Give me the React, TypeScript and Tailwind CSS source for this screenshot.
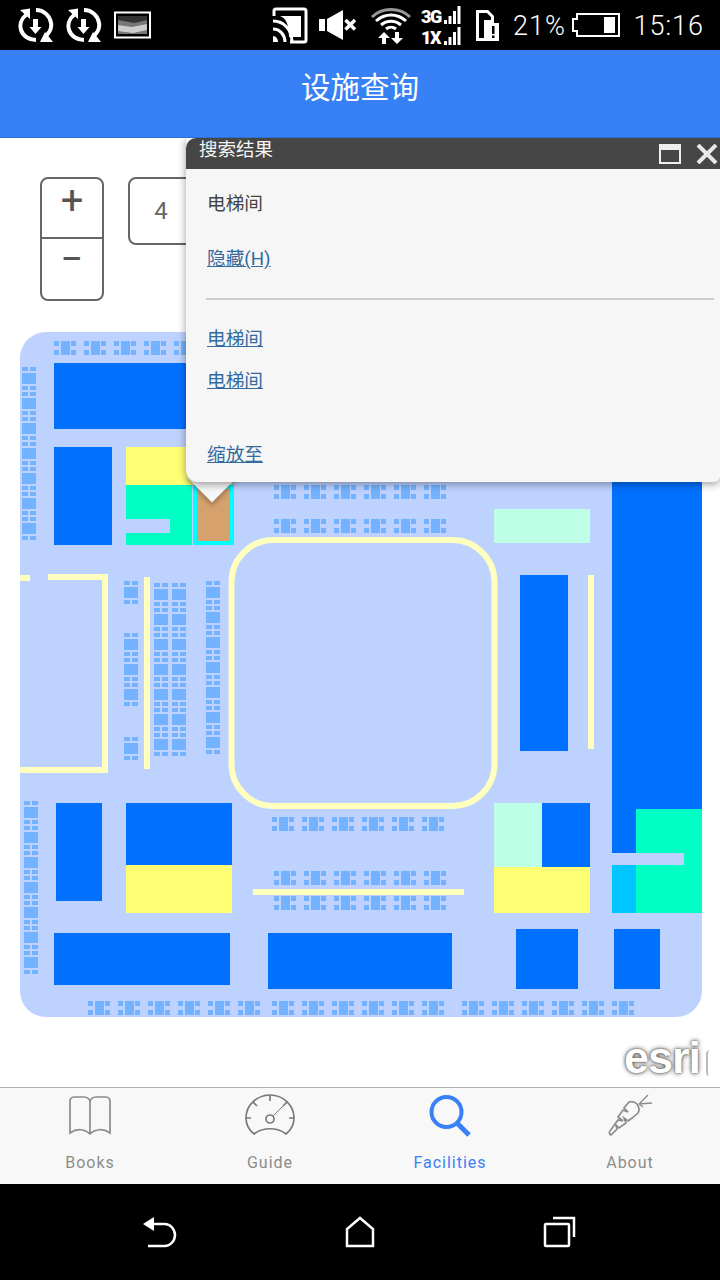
import React from "react";

const BLUE = "#0070ff";
const YEL = "#ffff73";
const AQUA = "#00ffc5";
const MINT = "#beffe8";
const PALE = "#ffffbe";
const DOT = "#73b2ff";
const LAND = "#bed2ff";

type R = [number, number, number, number, string];
const rects: R[] = [
  [54, 363, 180, 66, BLUE],
  [54, 447, 58, 98, BLUE],
  [126, 447, 106, 38, YEL],
  [126, 485, 66, 60, AQUA],
  [126, 519, 44, 14, LAND],
  [494, 470, 96, 12, YEL],
  [494, 509, 96, 34, MINT],
  [520, 575, 48, 176, BLUE],
  [588, 575, 6, 174, PALE],
  [612, 470, 90, 339, BLUE],
  [612, 809, 24, 44, BLUE],
  [636, 809, 66, 104, AQUA],
  [612, 865, 24, 48, "#00c5ff"],
  [612, 853, 72, 12, LAND],
  [20, 575, 10, 6, PALE],
  [48, 574, 60, 6, PALE],
  [102, 574, 6, 198, PALE],
  [20, 767, 88, 6, PALE],
  [144, 577, 6, 192, PALE],
  [56, 803, 46, 98, BLUE],
  [126, 803, 106, 62, BLUE],
  [126, 865, 106, 48, YEL],
  [253, 889, 211, 6, PALE],
  [494, 803, 48, 64, MINT],
  [542, 803, 48, 64, BLUE],
  [494, 867, 96, 46, YEL],
  [54, 933, 176, 52, BLUE],
  [268, 933, 184, 56, BLUE],
  [516, 929, 62, 60, BLUE],
  [614, 929, 46, 60, BLUE],
];

function HCluster({ x, y, w = 22 }: { x: number; y: number; w?: number }) {
  return (
    <g fill={DOT}>
      <rect x={x} y={y} width={5} height={5} />
      <rect x={x} y={y + 9} width={5} height={5} />
      <rect x={x + 7} y={y} width={w - 13} height={14} />
      <rect x={x + w - 5} y={y} width={5} height={5} />
      <rect x={x + w - 5} y={y + 9} width={5} height={5} />
    </g>
  );
}

function VCells({ x, y, n, w = 14 }: { x: number; y: number; n: number; w?: number }) {
  const out: React.ReactNode[] = [];
  let cy = y;
  for (let i = 0; i < n; i++) {
    out.push(
      <g key={i} fill={DOT}>
        <rect x={x} y={cy} width={w / 2 - 1} height={4} />
        <rect x={x + w / 2 + 1} y={cy} width={w / 2 - 1} height={4} />
        <rect x={x} y={cy + 6} width={w} height={11} />
        <rect x={x} y={cy + 19} width={w / 2 - 1} height={4} />
        <rect x={x + w / 2 + 1} y={cy + 19} width={w / 2 - 1} height={4} />
      </g>
    );
    cy += 25;
  }
  return <>{out}</>;
}

function MapDrawing() {
  const row = (y: number, x0: number, n: number, step = 30) =>
    Array.from({ length: n }, (_, i) => <HCluster key={`${y}-${x0}-${i}`} x={x0 + i * step} y={y} />);
  return (
    <svg className="absolute inset-0 h-full w-full" viewBox="0 138 720 949">
      <rect x={20} y={332} width={682} height={685} rx={26} fill={LAND} />
      {row(341, 54, 6)}
      {row(485, 274, 6)}
      {row(519, 274, 6)}
      {row(817, 272, 6)}
      {row(871, 274, 6)}
      {row(896, 274, 6)}
      {row(1001, 88, 6)}
      {row(1001, 272, 6)}
      {row(1001, 462, 6)}
      <VCells x={22} y={367} n={7} />
      <VCells x={124} y={581} n={1} />
      <VCells x={124} y={633} n={3} />
      <VCells x={124} y={737} n={1} />
      <VCells x={154} y={583} n={7} />
      <VCells x={172} y={583} n={7} />
      <VCells x={206} y={581} n={7} />
      <VCells x={24} y={801} n={7} />
      {rects.map((r, i) => (
        <rect key={i} x={r[0]} y={r[1]} width={r[2]} height={r[3]} fill={r[4]} />
      ))}
      <rect x={231.5} y={540} width={263} height={266} rx={42} fill="none" stroke={PALE} strokeWidth={6} />
      <rect x={195} y={487} width={37} height={56} fill="#d6a16d" stroke="#00ffff" strokeWidth={4} />
    </svg>
  );
}

function SyncIcon() {
  return (
    <svg width="36" height="36" viewBox="0 0 36 36" fill="none">
      <path d="M8 8C3 12 1.500 18 3 23c2 6 8 10 15 10" stroke="#fff" strokeWidth="4" />
      <path d="M18 3c8 0 14 6 15 13 1 5-1 9-5 13" stroke="#fff" strokeWidth="4" />
      <path d="M2 3l10-1.500V12z" fill="#fff" />
      <path d="M22 35h13l-8-10z" fill="#fff" />
      <path d="M15 12h5v8h3.500L17.500 27 11.500 20H15z" fill="#fff" />
    </svg>
  );
}

function StatusBar() {
  return (
    <div className="flex h-[50px] shrink-0 items-center bg-black pl-[18px] pr-[16px] font-['Roboto',sans-serif] text-white">
      <SyncIcon />
      <div className="ml-[12px]">
        <SyncIcon />
      </div>
      <svg className="ml-[12px]" width="37" height="28" viewBox="0 0 37 28">
        <rect x="1" y="1.500" width="35" height="25" fill="#000" stroke="#fff" strokeWidth="2" />
        <rect x="4" y="5" width="29" height="18" fill="#777" />
        <path d="M4 5h29v4L20 12 4 9z" fill="#333" />
        <path d="M4 14l14 2 15-3v6l-14 3-15-2z" fill="#ccc" />
      </svg>
      <svg className="ml-[121px]" width="36" height="37" viewBox="0 0 36 37" fill="none">
        <path d="M2 9V4a2 2 0 0 1 2-2h28a2 2 0 0 1 2 2v29a2 2 0 0 1-2 2H18" stroke="#fff" strokeWidth="3" />
        <path d="M8 9h21v21H17C17 18 14 11 8 9z" fill="#fff" />
        <path d="M1 14c11 0 19 9 19 21M1 22c7 0 12 6 12 13" stroke="#fff" strokeWidth="3" />
        <path d="M1 29c3 0 5 3 5 6H1z" fill="#fff" />
      </svg>
      <svg className="ml-[10px]" width="44" height="34" viewBox="0 0 44 34">
        <path d="M1 11h6v12H1zM9 11l16-9v30L9 23z" fill="#fff" />
        <path d="M27.500 12l9.500 9.500M37 12l-9.500 9.500" stroke="#fff" strokeWidth="3.500" />
      </svg>
      <svg className="ml-[8px]" width="42" height="38" viewBox="0 0 42 38" fill="none">
        <path d="M2 11C12 1 30 1 40 11" stroke="#999" strokeWidth="3" />
        <path d="M6 15c9-8 21-8 30 0M11 19c6-5 14-5 20 0M16 23c3-2.500 7-2.500 10 0" stroke="#fff" strokeWidth="3" />
        <path d="M14 26l6 6h-4v6h-4v-6H8zM27 38l6-6h-4v-6h-4v6h-4z" fill="#fff" />
      </svg>
      <div className="ml-[9px] flex w-[40px] flex-col gap-[3px]">
        <div className="flex h-[18px] items-end justify-between">
          <span className="text-[18px] leading-[14px] font-black tracking-[-1.5px]">3G</span>
          <Bars />
        </div>
        <div className="flex h-[18px] items-end justify-between">
          <span className="text-[18px] leading-[14px] font-black tracking-[-1.5px]">1X</span>
          <Bars />
        </div>
      </div>
      <svg className="ml-[15px]" width="23" height="31" viewBox="0 0 23 31" fill="none">
        <path d="M1.500 1.500h10l5 5v5h-7v18h-8z" stroke="#fff" strokeWidth="3" />
        <rect x="11" y="13" width="12" height="18" fill="#fff" />
        <rect x="16" y="16" width="2.500" height="8" fill="#000" />
        <rect x="16" y="25.500" width="2.500" height="2.500" fill="#000" />
      </svg>
      <span className="ml-[14px] mt-[3px] text-[27px] leading-none font-light tracking-[1px]">21%</span>
      <svg className="ml-[6px]" width="48" height="24" viewBox="0 0 48 24" fill="none">
        <path d="M5 1h42v22H5v-5H1V6h4z" stroke="#fff" strokeWidth="2" />
        <rect x="32" y="4" width="11" height="16" fill="#fff" />
      </svg>
      <span className="ml-auto mt-[3px] text-[27px] leading-none font-light tracking-[1px]">15:16</span>
    </div>
  );
}

function Bars() {
  return (
    <svg width="17" height="18" viewBox="0 0 17 18" fill="#fff">
      <rect x="0" y="14" width="3" height="4" />
      <rect x="4.500" y="10" width="3" height="8" />
      <rect x="9" y="5" width="3" height="13" />
      <rect x="13.500" y="0" width="3" height="18" />
    </svg>
  );
}

function Popup() {
  return (
    <div className="absolute left-[186px] top-0 h-[344px] w-[534px] font-['Roboto','Noto_Sans_CJK_SC',sans-serif]">
      <div className="absolute left-[8px] top-[321px] h-[36px] w-[36px] rotate-45 bg-[#f6f6f6] shadow-[2px_2px_5px_rgba(0,0,0,0.3)]" />
      <div className="relative flex h-full flex-col rounded-b-[12px] rounded-br-[6px] bg-[#f6f6f6] shadow-[0_2px_8px_rgba(0,0,0,0.4)]">
        <div className="flex h-[31px] shrink-0 items-center rounded-tl-[10px] bg-[#464646] pl-[13px] pr-[2px] text-[18.500px] leading-[22px] text-[#f4f4f4]">
          <span className="-mt-[7px]">搜索结果</span>
          <svg className="ml-auto mr-[15px] mt-[1px]" width="22" height="20" viewBox="0 0 22 20" fill="none">
            <rect x="1" y="1" width="20" height="18" stroke="#eee" strokeWidth="2" />
            <rect x="1" y="1" width="20" height="5" fill="#eee" />
          </svg>
          <svg className="mt-[1px]" width="22" height="20" viewBox="0 0 22 20" fill="none">
            <path d="M2 1l18 18M20 1L2 19" stroke="#e8e8e8" strokeWidth="4" />
          </svg>
        </div>
        <div className="flex flex-1 flex-col pl-[21px] text-[18.700px] leading-[24px]">
          <div className="mt-[23px] text-[#444]">电梯间</div>
          <a className="mt-[31px] text-[#336b9e] underline">隐藏(H)</a>
          <div className="-ml-px mr-[6px] mt-[27px] h-[2px] bg-[#ccc]" />
          <a className="mt-[27px] text-[#336b9e] underline">电梯间</a>
          <a className="mt-[18px] text-[#336b9e] underline">电梯间</a>
          <a className="mt-[50px] text-[#336b9e] underline">缩放至</a>
        </div>
      </div>
    </div>
  );
}

function ZoomControls() {
  return (
    <div className="absolute left-[40px] top-[39px] flex gap-[24px] font-['Roboto',sans-serif] text-[#555]">
      <div className="flex h-[124px] w-[64px] flex-col rounded-[8px] border-2 border-[#666] bg-white">
        <div className="flex h-[60px] items-start justify-center border-b-2 border-[#666] pt-[2px] text-[40px] leading-[40px]">+</div>
        <div className="flex flex-1 items-start justify-center pt-[2px] text-[40px] leading-[38px]">−</div>
      </div>
      <div className="flex h-[68px] w-[70px] items-center justify-center rounded-[8px] border-2 border-[#666] bg-white pr-[4px] text-[24px] text-[#666]">
        4
      </div>
    </div>
  );
}

function TabBar() {
  const label = "mt-[15px] text-[16px] leading-[20px] tracking-[1px]";
  return (
    <div className="grid h-[97px] shrink-0 grid-cols-4 border-t border-[#b2b2b2] bg-[#f8f8f8] font-['Roboto',sans-serif] text-[#8c8c8c]">
      <div className="flex flex-col items-center pt-[6px]">
        <svg width="44" height="44" viewBox="0 0 44 44" fill="none" stroke="#8c8c8c" strokeWidth="1.700">
          <path d="M22 40V8c0-3-3-5-6-5H6C3.500 3 2 5 2 7v32c7-5 15-4 20 1 5-5 13-6 20-1V7c0-2-1.500-4-4-4H28c-3 0-6 2-6 5" />
        </svg>
        <span className={label}>Books</span>
      </div>
      <div className="flex flex-col items-center pt-[6px]">
        <svg width="50" height="44" viewBox="0 0 50 44" fill="none" stroke="#7a7a7a" strokeWidth="1.700">
          <path d="M9 40C4 36 1 30 1 24 1 11 12 1 25 1s24 10 24 23c0 6-3 12-8 16-9-7-23-7-32 0z" />
          <path d="M25 1v6M1 24h5M49 24h-5M8 8l4 4M42 8l-4 4" />
          <circle cx="25" cy="25" r="4" />
          <path d="M28 22l12-12" strokeWidth="1" />
        </svg>
        <span className={label}>Guide</span>
      </div>
      <div className="flex flex-col items-center pt-[6px] text-[#3880f6]">
        <svg width="44" height="44" viewBox="0 0 44 44" fill="none" stroke="#3880f6" strokeWidth="4">
          <circle cx="18.500" cy="18" r="15" />
          <path d="M29 29l12 12" strokeWidth="5" />
        </svg>
        <span className={label}>Facilities</span>
      </div>
      <div className="flex flex-col items-center pt-[6px]">
        <svg width="44" height="44" viewBox="0 0 44 44" fill="none" stroke="#8c8c8c" strokeWidth="1.700">
          <path d="M3 41c-2-1-2-3-1-4l8-11 5 1-5-4 5-7 5 2-4-4 5-6c3-1 6 0 8 2 2 3 3 6 1 9-3 3-7 6-10 8l-4-3 2 5-7 5-3-3 1 4-6 6z" />
          <path d="M31 10l9-9M31 10l13-1M31 10l4 3" strokeWidth="1.400" />
        </svg>
        <span className={label}>About</span>
      </div>
    </div>
  );
}

function NavBar() {
  return (
    <div className="flex h-[96px] shrink-0 items-start justify-between bg-black pl-[143px] pr-[144px] pt-[32px]">
      <svg width="34" height="32" viewBox="0 0 34 32" fill="none">
        <path d="M0 8l11-7v14z" fill="#fff" />
        <path d="M8 8h14c5 0 10 5 10 11s-5 11-10 11H5" stroke="#fff" strokeWidth="2.500" />
      </svg>
      <svg width="30" height="32" viewBox="0 0 30 32" fill="none">
        <path d="M2 30V13L15 2l13 11v17z" stroke="#fff" strokeWidth="2.500" />
      </svg>
      <svg width="33" height="32" viewBox="0 0 33 32" fill="none">
        <rect x="2" y="8" width="24" height="22" rx="1" stroke="#fff" strokeWidth="2.500" />
        <path d="M10 2h21v19" stroke="#fff" strokeWidth="2.500" />
      </svg>
    </div>
  );
}

export default function App() {
  return (
    <div className="flex h-[1280px] w-[720px] flex-col overflow-hidden bg-white">
      <StatusBar />
      <div className="flex h-[88px] shrink-0 items-center justify-center border-b border-[#2f6fd8] bg-[#3880f6] pb-[16px] font-['Noto_Sans_CJK_SC',sans-serif] text-[29.500px] text-white">
        设施查询
      </div>
      <div className="relative flex-1 overflow-hidden bg-white">
        <MapDrawing />
        <ZoomControls />
        <Popup />
        <div className="absolute right-[20px] top-[896px] font-['Liberation_Sans',sans-serif] text-[45px] leading-[48px] font-bold tracking-[-1px] text-white [text-shadow:0_0_5px_#444,0_0_2px_#666]">
          esri
        </div>
        <div className="absolute right-[10px] top-[912px] h-[26px] w-[4px] rounded-l-full border-l-2 border-[#bbb]" />
      </div>
      <TabBar />
      <NavBar />
    </div>
  );
}
